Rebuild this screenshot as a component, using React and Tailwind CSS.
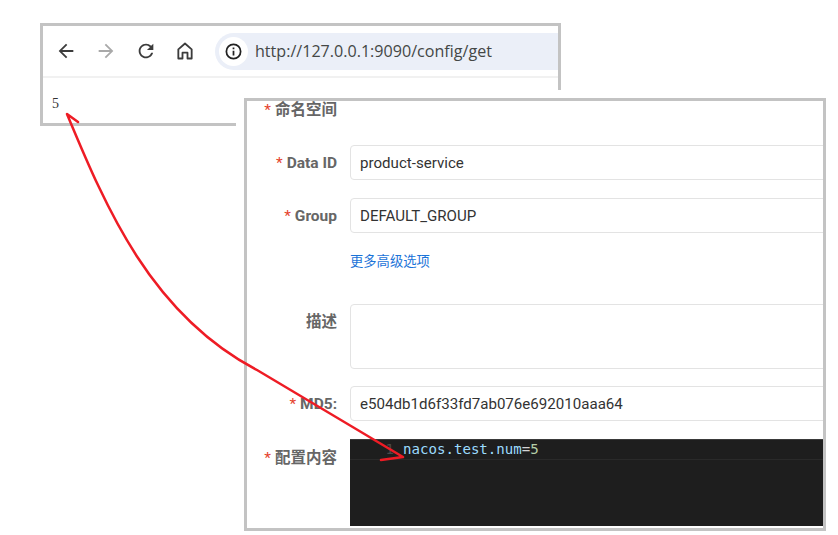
const cjk = '"Roboto", "Noto Sans CJK SC", sans-serif';

const Toolbar = () => (
  <div className="flex h-[52px] items-center border-b-2 border-[#f1f1f1] pl-[12px]">
    <svg className="w-[22px] h-[22px] text-[#3c3c3c]" viewBox="0 0 24 24" fill="currentColor">
      <path d="M20 11H7.83l5.59-5.59L12 4l-8 8 8 8 1.41-1.41L7.83 13H20v-2z" />
    </svg>
    <svg className="ml-[18px] w-[22px] h-[22px] text-[#a9a9a9]" viewBox="0 0 24 24" fill="currentColor">
      <path d="M4 11h12.17l-5.59-5.59L12 4l8 8-8 8-1.41-1.41L16.17 13H4v-2z" />
    </svg>
    <svg className="ml-[18px] w-[22px] h-[22px] text-[#3c3c3c]" viewBox="0 0 24 24" fill="currentColor">
      <path d="M17.65 6.35A7.958 7.958 0 0 0 12 4c-4.42 0-7.99 3.58-7.99 8s3.57 8 7.99 8c3.73 0 6.84-2.55 7.73-6h-2.08A5.99 5.99 0 0 1 12 18c-3.31 0-6-2.69-6-6s2.69-6 6-6c1.66 0 3.14.69 4.22 1.78L13 11h7V4l-2.35 2.35z" />
    </svg>
    <svg className="ml-[18px] w-[20px] h-[20px] text-[#3c3c3c]" viewBox="0 0 24 24" fill="none" stroke="currentColor" strokeWidth="2.2" strokeLinejoin="round">
      <path d="M4 21V10l8-7 8 7v11h-5v-7H9v7H4z" />
    </svg>
    <div className="ml-[20px] flex h-[37px] flex-1 items-center rounded-l-full bg-[#ebeff8] pl-[4px]">
      <div className="flex h-[29px] w-[29px] items-center justify-center rounded-full bg-white">
        <svg className="w-[19px] h-[19px] text-[#222]" viewBox="0 0 24 24" fill="none" stroke="currentColor" strokeWidth="2.2">
          <circle cx="12" cy="12" r="9" />
          <path d="M12 11v6M12 7v2" />
        </svg>
      </div>
      <span className="ml-[7px] text-[16.1px] text-[#444746]" style={{ fontFamily: '"Open Sans", sans-serif' }}>
        http://127.0.0.1:9090/config/get
      </span>
    </div>
  </div>
);

const Label = ({ children }) => (
  <div className="w-[90px] shrink-0 whitespace-nowrap pt-[2px] text-right text-[15.5px] font-bold text-[#666]">
    <span className="mr-[4px] font-normal text-[#e5432e]">*</span>
    {children}
  </div>
);

const Input = ({ value }) => (
  <div className="flex h-[35px] w-[600px] shrink-0 items-center rounded-l border border-[#e3e3e3] pl-[9px] pt-[1px] text-[15.1px] text-[#333]">
    {value}
  </div>
);

const Row = ({ label, value, className }) => (
  <div className={`flex items-center gap-[13px] ${className}`}>
    <Label>{label}</Label>
    <Input value={value} />
  </div>
);

export default function App() {
  return (
    <div className="relative h-[535px] w-[838px] overflow-hidden bg-white" style={{ fontFamily: cjk }}>
      {/* browser window */}
      <div className="absolute left-[40px] top-[23px] h-[103px] w-[521px] border-[3px] border-[#c3c3c3]">
        <Toolbar />
        <div className="pl-[9px] pt-[18px] text-[14px] leading-4 text-[#333]" style={{ fontFamily: '"Liberation Serif", serif' }}>
          5
        </div>
      </div>

      {/* nacos form */}
      <div className="absolute left-[244px] top-[98px] h-[433px] w-[582px] overflow-hidden border-[3px] border-[#c3c3c3] shadow-[0_0_0_8px_white] bg-white">
        <div className="flex h-[18px] items-center">
          <Label>命名空间</Label>
        </div>
        <Row label="Data ID" value="product-service" className="mt-[26px]" />
        <Row label="Group" value="DEFAULT_GROUP" className="mt-[18px]" />
        <div className="ml-[103px] mt-[20px] text-[13.3px] leading-[18px] text-[#1a73d8]">更多高级选项</div>
        <div className="mt-[33px] flex items-start gap-[13px]">
          <div className="w-[90px] shrink-0 pt-[7px] text-right text-[15.5px] font-bold text-[#666]">描述</div>
          <div className="h-[65px] w-[600px] shrink-0 rounded-l border border-[#e3e3e3]" />
        </div>
        <Row label="MD5:" value="e504db1d6f33fd7ab076e692010aaa64" className="mt-[17px]" />
        <div className="mt-[18px] flex items-start gap-[13px]">
          <div className="shrink-0 pt-[6px]">
            <Label>配置内容</Label>
          </div>
          <div className="h-[87px] w-[600px] shrink-0 border-t border-[#3a3a3a] bg-[#1e1e1e]" style={{ fontFamily: '"DejaVu Sans Mono", monospace' }}>
            <div className="flex h-[20px] items-center border-b border-[#2a2a2a] text-[14.1px]">
              <span className="w-[53px] pr-[9px] text-right text-[#4a4a4a]">1</span>
              <span className="text-[#9cdcfe]">nacos.test.num</span>
              <span className="text-[#d4d4d4]">=</span>
              <span className="text-[#b5cea8]">5</span>
            </div>
          </div>
        </div>
      </div>

      {/* red annotation arrow */}
      <svg className="absolute left-0 top-0" width="838" height="535" fill="none" stroke="#ee1c25" strokeWidth="2.5" strokeLinecap="round" strokeLinejoin="round">
        <path d="M78 122L67 114C105 205 150 314 257 370L403 457L381 460" />
      </svg>
    </div>
  );
}
